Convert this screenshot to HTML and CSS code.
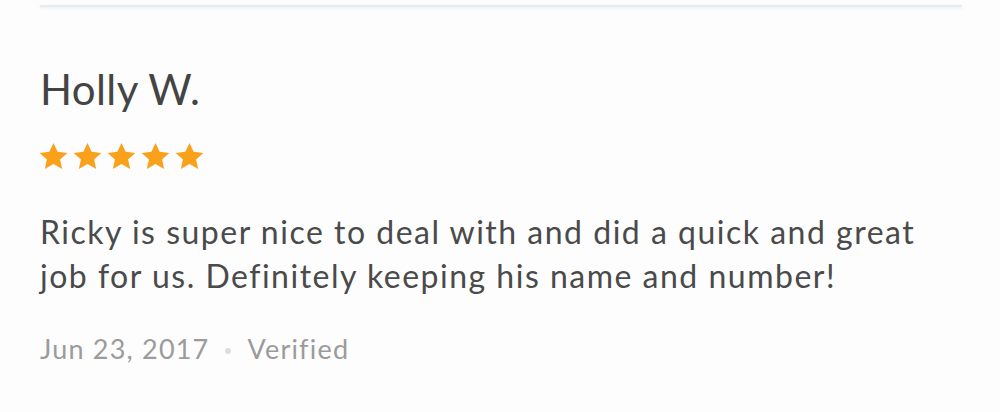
FILE: index.html
```html
<!DOCTYPE html>
<html>
<head>
<meta charset="utf-8">
<link rel="stylesheet" href="styles.css">
</head>
<body>
<div class="review">
  <div class="divider"></div>
  <h2 class="name">Holly W.</h2>
  <div class="stars">
    <svg class="star" viewBox="0 0 24 24"><path d="M12 1.5l3.2 6.9 7.5.8-5.6 5.1 1.6 7.4L12 17.9l-6.7 3.8 1.6-7.4-5.6-5.1 7.5-.8z"/></svg>
    <svg class="star" viewBox="0 0 24 24"><path d="M12 1.5l3.2 6.9 7.5.8-5.6 5.1 1.6 7.4L12 17.9l-6.7 3.8 1.6-7.4-5.6-5.1 7.5-.8z"/></svg>
    <svg class="star" viewBox="0 0 24 24"><path d="M12 1.5l3.2 6.9 7.5.8-5.6 5.1 1.6 7.4L12 17.9l-6.7 3.8 1.6-7.4-5.6-5.1 7.5-.8z"/></svg>
    <svg class="star" viewBox="0 0 24 24"><path d="M12 1.5l3.2 6.9 7.5.8-5.6 5.1 1.6 7.4L12 17.9l-6.7 3.8 1.6-7.4-5.6-5.1 7.5-.8z"/></svg>
    <svg class="star" viewBox="0 0 24 24"><path d="M12 1.5l3.2 6.9 7.5.8-5.6 5.1 1.6 7.4L12 17.9l-6.7 3.8 1.6-7.4-5.6-5.1 7.5-.8z"/></svg>
  </div>
  <p class="text">Ricky is super nice to deal with and did a quick and great job for us. Definitely keeping his name and number!</p>
  <div class="meta"><span>Jun 23, 2017</span><span class="dot"></span><span>Verified</span></div>
</div>
</body>
</html>
```
FILE: styles.css
```css
html, body {
  margin: 0;
  padding: 0;
  background: #fdfdfd;
}
body {
  font-family: Lato, "Open Sans", sans-serif;
  width: 1000px;
  height: 412px;
  overflow: hidden;
}
.review {
  padding: 5px 38px 0 40px;
}
.divider {
  height: 2px;
  background: #e6ebf0;
  box-shadow: 0 1px 3px rgba(210, 220, 228, 0.5);
}
.name {
  margin: 54px 0 0;
  font-size: 42px;
  font-weight: 400;
  letter-spacing: 0.4px;
  color: #444;
  line-height: 56px;
}
.stars {
  display: flex;
  gap: 3px;
  margin-top: 24px;
  margin-left: -2px;
}
.star {
  width: 31px;
  height: 31px;
  fill: #f9a11b;
}
.text {
  margin: 38px 0 0;
  font-size: 32px;
  font-weight: 400;
  letter-spacing: 1.5px;
  line-height: 44px;
  color: #4a4a4a;
  width: 900px;
}
.meta {
  display: flex;
  align-items: center;
  margin-top: 33px;
  font-size: 27px;
  letter-spacing: 1.2px;
  line-height: 36px;
  color: #9b9b9b;
}
.dot {
  width: 6px;
  height: 6px;
  border-radius: 50%;
  background: #dedede;
  margin: 3px 16px 0;
}
```
